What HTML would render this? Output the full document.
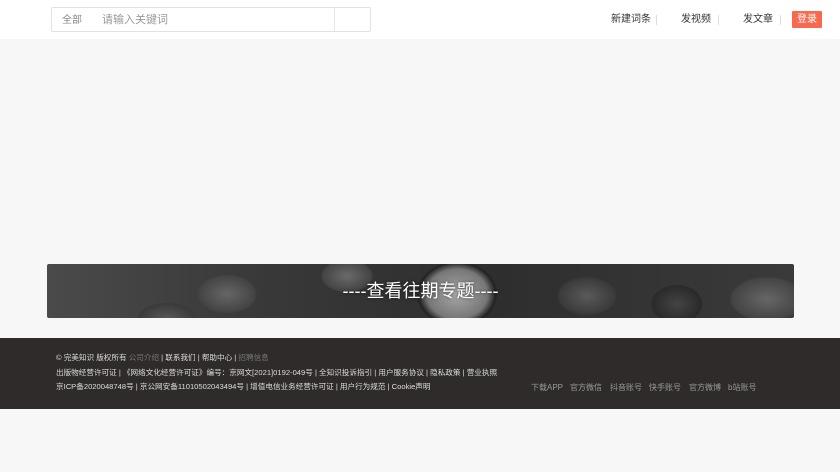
<!DOCTYPE html>
<html><head><meta charset="utf-8"><style>
*{margin:0;padding:0;box-sizing:border-box}
body{width:840px;height:472px;background:#f7f7f7;font-family:"Liberation Sans","Noto Sans CJK SC",sans-serif;position:relative;overflow:hidden}
span,div{line-height:1}
.top{position:absolute;left:0;top:0;width:840px;height:39px;background:#fff}
.search{position:absolute;left:51px;top:7px;width:320px;height:25px;border:1px solid #e2e2e2;border-radius:2px;background:#fff}
.search .a{position:absolute;left:10px;top:8px;font-size:10px;color:#888}
.search .b{position:absolute;left:50px;top:7px;font-size:11px;color:#999}
.search .c{position:absolute;left:282px;top:0;width:1px;height:23px;background:#e6e6e6}
.nav{position:absolute;top:15px;font-size:10px;color:#333}
.sep{position:absolute;top:15px;width:1px;height:10px;background:#ddd}
.login{position:absolute;left:792px;top:11px;width:30px;height:17px;background:#f76a4f;color:#fff;font-size:10px;text-align:center;line-height:18px;border-radius:1px}
.banner{position:absolute;left:47px;top:264px;width:747px;height:54px;border-radius:2px;overflow:hidden;
background:
radial-gradient(ellipse 55px 45px at 410px 30px,#a8a8a8 0,#777 55%,#222 70%,transparent 74%),
radial-gradient(ellipse 40px 26px at 180px 30px,#666 0,#444 70%,transparent 75%),
radial-gradient(ellipse 35px 22px at 300px 12px,#6a6a6a 0,#444 70%,transparent 75%),
radial-gradient(ellipse 40px 26px at 540px 32px,#5a5a5a 0,#3a3a3a 70%,transparent 75%),
radial-gradient(ellipse 35px 26px at 630px 40px,#444 0,#2a2a2a 70%,transparent 75%),
radial-gradient(ellipse 50px 30px at 720px 35px,#666 0,#444 70%,transparent 75%),
radial-gradient(ellipse 40px 22px at 120px 55px,#5a5a5a 0,#3a3a3a 70%,transparent 75%),
linear-gradient(90deg,#4a4a4a 0,#383838 30%,#2e2e2e 60%,#3a3a3a 100%)}
.banner span{position:absolute;left:0;right:0;top:18px;text-align:center;color:#fff;font-size:18px;text-shadow:0 0 3px rgba(0,0,0,.6)}
.foot{position:absolute;left:0;top:338px;width:840px;height:71px;background:#2f2b2a}
.fl{position:absolute;left:56px;font-size:7.6px;color:#ddd;white-space:nowrap}
.fl i{font-style:normal;color:#777}
.fr{position:absolute;top:46px;font-size:8px;color:#999}
</style></head><body>
<div class="top">
<div class="search"><span class="a">全部</span><span class="b">请输入关键词</span><div class="c"></div></div>
<span class="nav" style="left:611px">新建词条</span><div class="sep" style="left:656px"></div>
<span class="nav" style="left:681px">发视频</span><div class="sep" style="left:718px"></div>
<span class="nav" style="left:743px">发文章</span><div class="sep" style="left:780px"></div>
<div class="login">登录</div>
</div>
<div class="banner"><span>----查看往期专题----</span></div>
<div class="foot">
<div class="fl" style="top:16px">© 完美知识 版权所有 <i>公司介绍</i> | 联系我们 | 帮助中心 | <i>招聘信息</i></div>
<div class="fl" style="top:31px">出版物经营许可证 | 《网络文化经营许可证》编号：京网文[2021]0192-049号 | 全知识投诉指引 | 用户服务协议 | 隐私政策 | 营业执照</div>
<div class="fl" style="top:45px">京ICP备2020048748号 | 京公网安备11010502043494号 | 增值电信业务经营许可证 | 用户行为规范 | Cookie声明</div>
<span class="fr" style="left:531px">下载APP</span>
<span class="fr" style="left:570px">官方微信</span>
<span class="fr" style="left:610px">抖音账号</span>
<span class="fr" style="left:649px">快手账号</span>
<span class="fr" style="left:689px">官方微博</span>
<span class="fr" style="left:728px">b站账号</span>
</div>
</body></html>
